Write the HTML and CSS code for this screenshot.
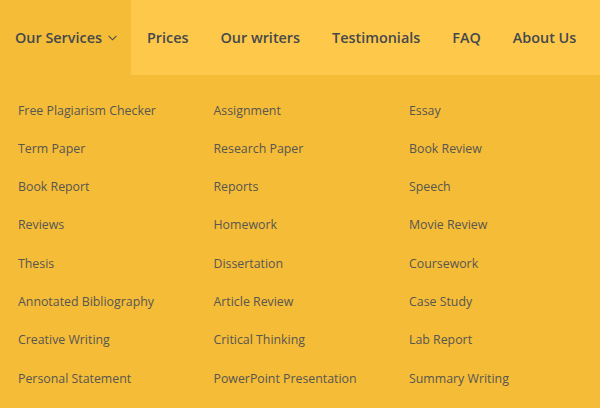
FILE: index.html
```html
<!DOCTYPE html>
<html lang="en">
<head>
<meta charset="utf-8">
<title>Menu</title>
<link rel="stylesheet" href="styles.css">
</head>
<body>
<nav class="nav">
  <div class="nav-item nav-item--active">Our Services
    <svg class="chev" width="9" height="6" viewBox="0 0 9 6"><path d="M0.6 0.8 L4.5 4.8 L8.4 0.8" fill="none" stroke="#4a4c4a" stroke-width="1.1"/></svg>
  </div>
  <div class="nav-item">Prices</div>
  <div class="nav-item">Our writers</div>
  <div class="nav-item">Testimonials</div>
  <div class="nav-item">FAQ</div>
  <div class="nav-item">About Us</div>
  <div class="nav-fill"></div>
</nav>
<div class="dropdown">
  <a class="dd-item">Free Plagiarism Checker</a>
  <a class="dd-item">Assignment</a>
  <a class="dd-item">Essay</a>
  <a class="dd-item">Term Paper</a>
  <a class="dd-item">Research Paper</a>
  <a class="dd-item">Book Review</a>
  <a class="dd-item">Book Report</a>
  <a class="dd-item">Reports</a>
  <a class="dd-item">Speech</a>
  <a class="dd-item">Reviews</a>
  <a class="dd-item">Homework</a>
  <a class="dd-item">Movie Review</a>
  <a class="dd-item">Thesis</a>
  <a class="dd-item">Dissertation</a>
  <a class="dd-item">Coursework</a>
  <a class="dd-item">Annotated Bibliography</a>
  <a class="dd-item">Article Review</a>
  <a class="dd-item">Case Study</a>
  <a class="dd-item">Creative Writing</a>
  <a class="dd-item">Critical Thinking</a>
  <a class="dd-item">Lab Report</a>
  <a class="dd-item">Personal Statement</a>
  <a class="dd-item">PowerPoint Presentation</a>
  <a class="dd-item">Summary Writing</a>
</div>
</body>
</html>
```
FILE: styles.css
```css
html, body {
  margin: 0;
  padding: 0;
}
body {
  width: 600px;
  height: 408px;
  overflow: hidden;
  background: #f5bc38;
  font-family: "Open Sans", "Liberation Sans", sans-serif;
}
.nav {
  display: flex;
  height: 75px;
  background: #fec84b;
}
.nav-item {
  display: flex;
  align-items: center;
  gap: 6px;
  padding: 0 16px;
  line-height: 75px;
  font-size: 14.4px;
  font-weight: 600;
  color: #45494b;
  white-space: nowrap;
}
.nav-item--active {
  background: #f5bc38;
  padding: 0 14px 0 15px;
}
.chev {
  display: block;
  margin-top: 1px;
}
.nav-fill {
  flex: 1;
}
.dropdown {
  display: grid;
  grid-template-columns: 195.5px 195.5px 195.5px;
  row-gap: 20.33px;
  padding: 26.5px 0 0 18px;
}
.dd-item {
  font-size: 12.35px;
  line-height: 18px;
  color: #575650;
  white-space: nowrap;
}
```
